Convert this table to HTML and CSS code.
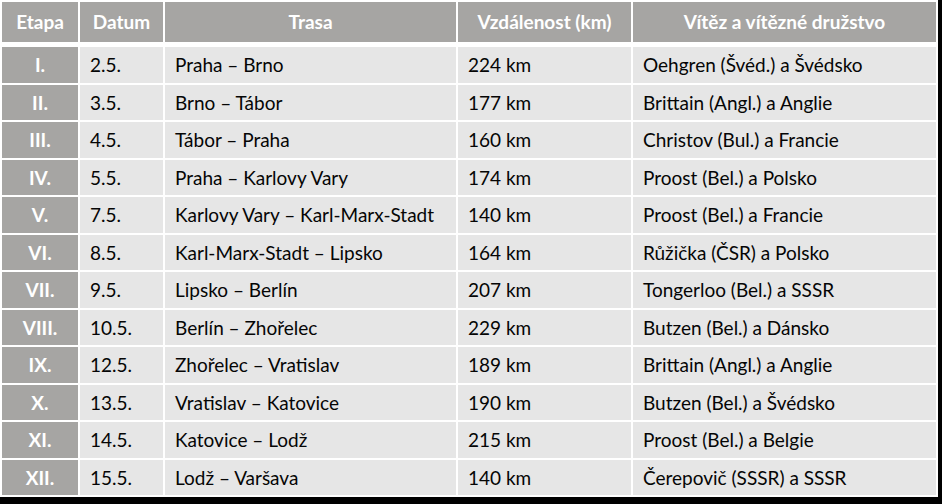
FILE: index.html
```html
<!DOCTYPE html>
<html lang="cs">
<head>
<meta charset="utf-8">
<title>Etapy závodu</title>
<link rel="stylesheet" href="styles.css">
</head>
<body>
<table class="stages">
  <colgroup>
    <col class="c-stage"><col class="c-date"><col class="c-route"><col class="c-dist"><col class="c-win">
  </colgroup>
  <thead>
    <tr>
      <th>Etapa</th>
      <th>Datum</th>
      <th>Trasa</th>
      <th>Vzdálenost (km)</th>
      <th>Vítěz a vítězné družstvo</th>
    </tr>
  </thead>
  <tbody>
    <tr><th>I.</th><td>2.5.</td><td>Praha – Brno</td><td>224 km</td><td>Oehgren (Švéd.) a Švédsko</td></tr>
    <tr><th>II.</th><td>3.5.</td><td>Brno – Tábor</td><td>177 km</td><td>Brittain (Angl.) a Anglie</td></tr>
    <tr><th>III.</th><td>4.5.</td><td>Tábor – Praha</td><td>160 km</td><td>Christov (Bul.) a Francie</td></tr>
    <tr><th>IV.</th><td>5.5.</td><td>Praha – Karlovy Vary</td><td>174 km</td><td>Proost (Bel.) a Polsko</td></tr>
    <tr><th>V.</th><td>7.5.</td><td>Karlovy Vary – Karl-Marx-Stadt</td><td>140 km</td><td>Proost (Bel.) a Francie</td></tr>
    <tr><th>VI.</th><td>8.5.</td><td>Karl-Marx-Stadt – Lipsko</td><td>164 km</td><td>Růžička (ČSR) a Polsko</td></tr>
    <tr><th>VII.</th><td>9.5.</td><td>Lipsko – Berlín</td><td>207 km</td><td>Tongerloo (Bel.) a SSSR</td></tr>
    <tr><th>VIII.</th><td>10.5.</td><td>Berlín – Zhořelec</td><td>229 km</td><td>Butzen (Bel.) a Dánsko</td></tr>
    <tr><th>IX.</th><td>12.5.</td><td>Zhořelec – Vratislav</td><td>189 km</td><td>Brittain (Angl.) a Anglie</td></tr>
    <tr><th>X.</th><td>13.5.</td><td>Vratislav – Katovice</td><td>190 km</td><td>Butzen (Bel.) a Švédsko</td></tr>
    <tr><th>XI.</th><td>14.5.</td><td>Katovice – Lodž</td><td>215 km</td><td>Proost (Bel.) a Belgie</td></tr>
    <tr><th>XII.</th><td>15.5.</td><td>Lodž – Varšava</td><td>140 km</td><td>Čerepovič (SSSR) a SSSR</td></tr>
  </tbody>
</table>
</body>
</html>
```
FILE: styles.css
```css
html, body {
  margin: 0;
  padding: 0;
  background: #000;
}

.stages {
  table-layout: fixed;
  width: 938px;
  border-collapse: separate;
  border-spacing: 2px;
  background: #fff;
  font-family: Lato, "Open Sans", sans-serif;
  font-size: 19px;
  color: #050505;
}

.c-stage { width: 76px; }
.c-date { width: 83px; }
.c-route { width: 291px; }
.c-dist { width: 173px; }
.c-win { width: 303px; }

.stages th,
.stages td {
  padding: 0 0 0 10px;
  box-sizing: border-box;
  white-space: nowrap;
  vertical-align: middle;
}

.stages thead th {
  height: 43px;
  padding: 0 0 2px 0;
  background: #a6a5a3;
  border-bottom: 3px solid #fff;
  background-clip: padding-box;
  color: #fff;
  font-weight: 700;
  text-align: center;
}

.stages tbody th {
  height: 35.5px;
  padding: 0;
  background: #a6a5a3;
  color: #fff;
  font-weight: 700;
  text-align: center;
}

.stages tbody td {
  height: 35.5px;
  background: #e6e6e6;
  text-align: left;
}
```
